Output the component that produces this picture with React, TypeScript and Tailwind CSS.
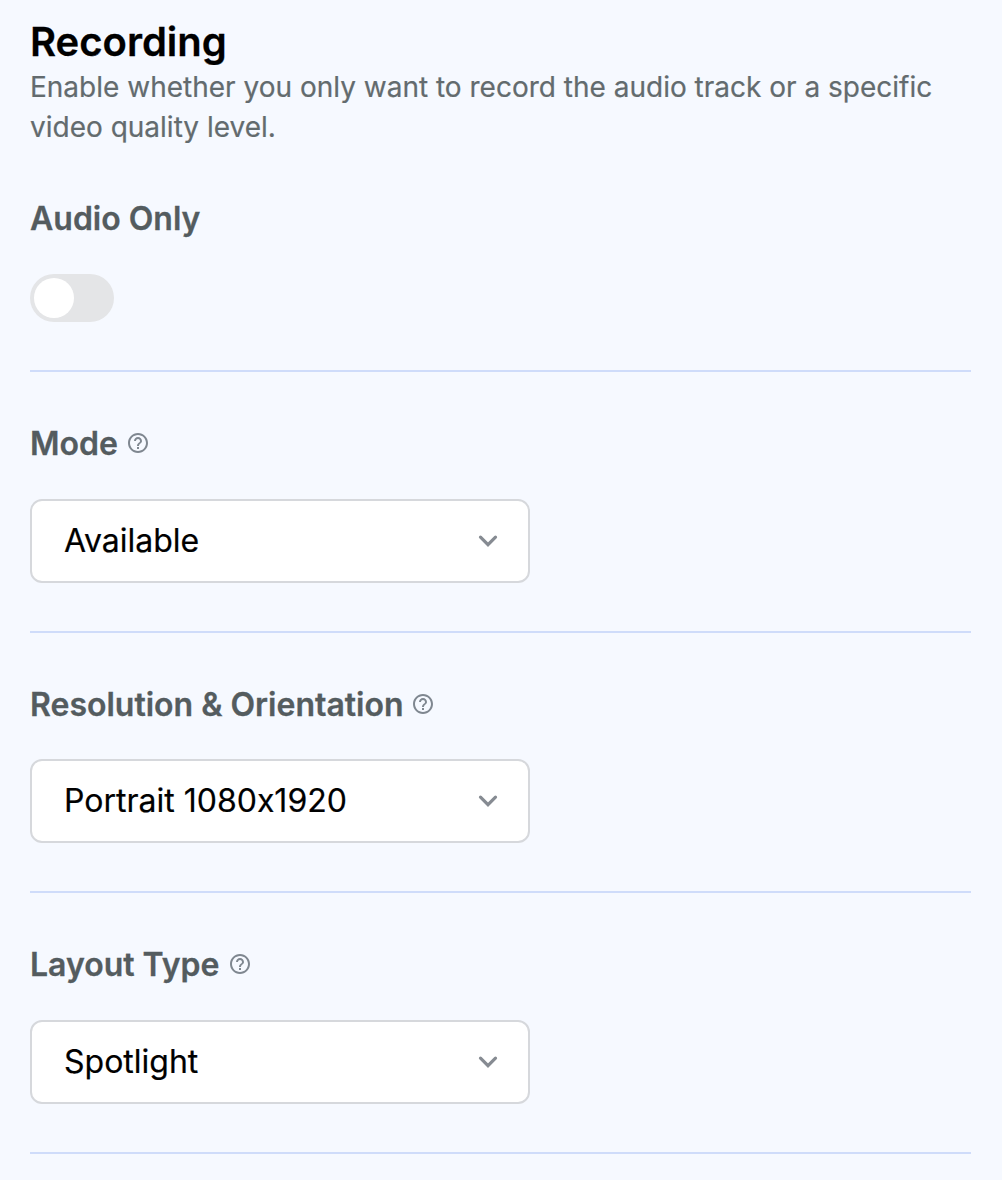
import React from "react";
import { MdHelpOutline } from "react-icons/md";

type SelectFieldProps = {
  label: string;
  value: string;
  className: string;
  labelGap: string;
  controlGap: string;
};

function SelectField({ label, value, className, labelGap, controlGap }: SelectFieldProps) {
  return (
    <section className={`border-b-2 border-[#cfdcfa] pt-[52px] ${className}`}>
      <div className={`flex h-10 items-center ${labelGap}`}>
        <h2 className="text-[32px] font-semibold leading-10 text-[#545c5f] [-webkit-text-stroke:0.3px]">{label}</h2>
        <MdHelpOutline className="mb-0.5 size-6 text-[#7f8790]" />
      </div>
      <button className={`flex h-[84px] w-[500px] items-center justify-between rounded-xl border-2 border-[#d6d8dc] bg-white pl-8 pr-[30px] text-[32px] text-black ${controlGap}`}>
        <span className="[-webkit-text-stroke:0.2px]">{value}</span>
        <svg className="h-5 w-5" viewBox="0 0 20 20" fill="none" stroke="#868b92" strokeWidth="3.2" strokeLinecap="round">
          <path d="M2.5 6.2 10 13.7l7.5-7.5" />
        </svg>
      </button>
    </section>
  );
}

export default function App() {
  return (
    <main className="h-[1180px] w-[1002px] overflow-hidden bg-[#f6f9ff] pl-[30px] pr-[31px] pt-[18px] font-['Inter',sans-serif] [font-feature-settings:'calt'_0]">
      <h1 className="text-[40px] font-semibold leading-[48px] text-black [-webkit-text-stroke:0.3px]">Recording</h1>
      <p className="mt-px text-[28px] leading-10 text-[#636b6e] [-webkit-text-stroke:0.2px]">
        Enable whether you only want to record the audio track or a specific video quality level.
      </p>
      <section className="mt-[52px] h-[173px] border-b-2 border-[#cfdcfa]">
        <h2 className="text-[32px] font-semibold leading-10 text-[#545c5f] [-webkit-text-stroke:0.3px]">Audio Only</h2>
        <button role="switch" aria-checked="false" aria-label="Audio Only" className="mt-[35px] flex h-12 w-[84px] items-center rounded-full bg-[#e4e5e7] p-1">
          <span className="size-10 rounded-full bg-white" />
        </button>
      </section>
      <SelectField label="Mode" value="Available" className="h-[261px]" labelGap="gap-2" controlGap="mt-[35px]" />
      <SelectField label="Resolution & Orientation" value="Portrait 1080x1920" className="h-[260px]" labelGap="gap-[7px]" controlGap="mt-[34px]" />
      <SelectField label="Layout Type" value="Spotlight" className="h-[261px]" labelGap="gap-[9px]" controlGap="mt-[35px]" />
    </main>
  );
}
